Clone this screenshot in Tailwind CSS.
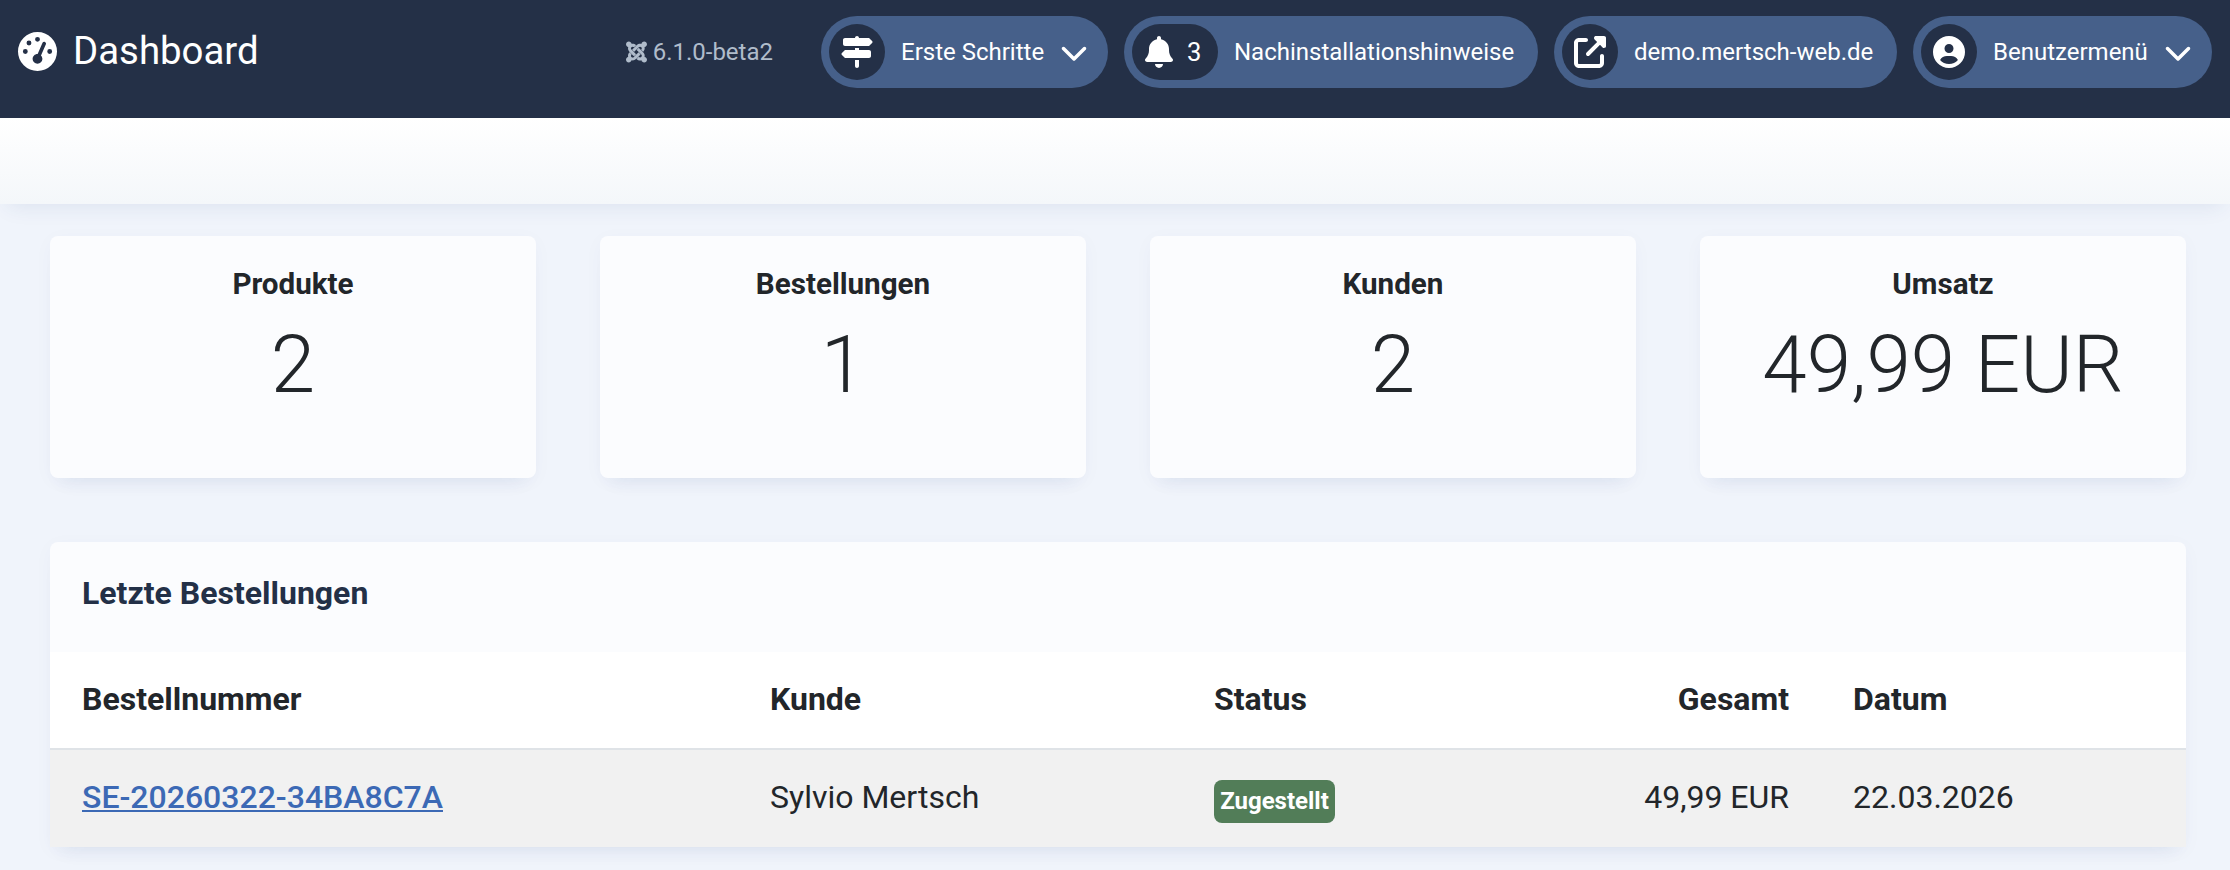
<!DOCTYPE html>
<html lang="de">
<head>
    <meta charset="UTF-8">
    <meta name="viewport" content="width=device-width, initial-scale=1.0">
    <script src="https://cdn.jsdelivr.net/npm/@tailwindcss/browser@4"></script>
    <title>Dashboard</title>
</head>
<body class="min-h-screen overflow-hidden bg-[#f0f4fb] font-[Roboto,sans-serif] text-[#22262a]">

    <!-- Icons -->
    <svg class="hidden">
        <symbol id="gauge" viewBox="0 0 512 512"><path d="M0 256a256 256 0 1 1 512 0A256 256 0 1 1 0 256zM288 96a32 32 0 1 0 -64 0 32 32 0 1 0 64 0zM256 416c35.3 0 64-28.7 64-64c0-17.4-6.9-33.1-18.1-44.6L366 161.7c5.3-12.1-.2-26.3-12.3-31.6s-26.3 .2-31.6 12.3L257.9 288c-.6 0-1.3 0-1.9 0c-35.3 0-64 28.7-64 64s28.7 64 64 64zM176 144a32 32 0 1 0 -64 0 32 32 0 1 0 64 0zM96 288a32 32 0 1 0 0-64 32 32 0 1 0 0 64zm352-32a32 32 0 1 0 -64 0 32 32 0 1 0 64 0z"/></symbol>
        <symbol id="joomla" viewBox="0 0 448 512"><path d="M.6 92.1C.6 58.8 27.4 32 60.4 32c30 0 54.5 21.9 59.2 50.2 32.6-7.6 67.1.6 96.5 30l-44.3 44.3c-20.5-20.5-42.6-16.3-55.4-3.5-14.3 14.3-14.3 37.9 0 52.2l99.5 99.5-44 44.3c-87.7-87.2-49.7-49.7-99.8-99.7-26.8-26.5-35-64.8-24.8-98.9C20.4 144.6.6 120.7.6 92.1zm129.5 116.4l44.3 44.3c10-10 89.7-89.7 99.7-99.8 14.3-14.3 37.6-14.3 51.9 0 12.8 12.8 17 35-3.5 55.4l44 44.3c31.2-31.2 38.5-67.6 28.9-101.2 29.2-4.1 51.9-29.2 51.9-59.5 0-33.2-26.8-60.1-59.8-60.1-30.3 0-55.4 22.5-59.5 51.6-33.8-9.9-71.7-1.5-98.3 25.1-18.3 19.1-71.1 71.5-99.6 99.9zm266.3 152.2c8.2-32.7-.9-68.5-26.3-93.9-11.8-12.2 5 4.7-99.5-99.7l-44.3 44.3 99.7 99.7c14.3 14.3 14.3 37.6 0 51.9-12.8 12.8-35 17-55.4-3.5l-44 44.3c27.6 30.2 68 38.8 102.7 28 5.5 27.4 29.7 48.1 58.9 48.1 33 0 59.8-26.8 59.8-60.1 0-30.2-22.5-55-51.6-59.1zm-84.3-53.1l-44-44.3c-87 86.4-50.4 50.4-99.7 99.8-14.3 14.3-37.6 14.3-51.9 0-13.1-13.4-16.9-35.3 3.2-55.4l-44-44.3c-30.2 30.2-38 65.2-29.5 98.3-26.7 6-46.2 29.9-46.2 58.2C0 453.2 26.8 480 59.8 480c28.6 0 52.5-19.8 58.6-46.7 32.7 8.2 68.5-.6 94.2-26 32.1-32 12.2-12.4 99.5-99.7z"/></symbol>
        <symbol id="signpost" viewBox="0 0 512 512"><path d="M224 32H64C46.3 32 32 46.3 32 64v64c0 17.7 14.3 32 32 32H441.4c4.2 0 8.3-1.7 11.3-4.7l48-48c6.2-6.2 6.2-16.4 0-22.6l-48-48c-3-3-7.1-4.7-11.3-4.7H288c0-17.7-14.3-32-32-32s-32 14.3-32 32zM480 256c0-17.7-14.3-32-32-32H288V192H224v32H70.6c-4.2 0-8.3 1.7-11.3 4.7l-48 48c-6.2 6.2-6.2 16.4 0 22.6l48 48c3 3 7.1 4.7 11.3 4.7H448c17.7 0 32-14.3 32-32V256zM288 480V384H224v96c0 17.7 14.3 32 32 32s32-14.3 32-32z"/></symbol>
        <symbol id="bell" viewBox="0 0 448 512"><path d="M224 0c-17.7 0-32 14.3-32 32V51.2C119 66 64 130.6 64 208v18.8c0 47-17.3 92.4-48.5 127.6l-7.4 8.3c-8.4 9.4-10.4 22.9-5.3 34.4S19.4 416 32 416H416c12.6 0 24-7.4 29.2-18.9s3.1-25-5.3-34.4l-7.4-8.3C401.3 319.2 384 273.9 384 226.8V208c0-77.4-55-142-128-156.8V32c0-17.7-14.3-32-32-32zm45.3 493.3c12-12 18.7-28.3 18.7-45.3H224 160c0 17 6.7 33.3 18.7 45.3s28.3 18.7 45.3 18.7s33.3-6.7 45.3-18.7z"/></symbol>
        <symbol id="external" viewBox="0 0 512 512"><path d="M352 0c-12.9 0-24.6 7.8-29.6 19.8s-2.2 25.7 6.9 34.9L370.7 96 201.4 265.4c-12.5 12.5-12.5 32.8 0 45.3s32.8 12.5 45.3 0L416 141.3l41.4 41.4c9.2 9.2 22.9 11.9 34.9 6.9s19.8-16.6 19.8-29.6V32c0-17.7-14.3-32-32-32H352zM80 32C35.8 32 0 67.8 0 112V432c0 44.2 35.8 80 80 80H400c44.2 0 80-35.8 80-80V320c0-17.7-14.3-32-32-32s-32 14.3-32 32V432c0 8.8-7.2 16-16 16H80c-8.8 0-16-7.2-16-16V112c0-8.8 7.2-16 16-16H192c17.7 0 32-14.3 32-32s-14.3-32-32-32H80z"/></symbol>
        <symbol id="user" viewBox="0 0 512 512"><path d="M399 384.2C376.9 345.8 335.4 320 288 320H224c-47.4 0-88.9 25.8-111 64.2c35.2 39.2 86.2 63.8 143 63.8s107.8-24.7 143-63.8zM0 256a256 256 0 1 1 512 0A256 256 0 1 1 0 256zm256 16a72 72 0 1 0 0-144 72 72 0 1 0 0 144z"/></symbol>
        <symbol id="chevron" viewBox="0 0 512 512"><path d="M233.4 406.6c12.5 12.5 32.8 12.5 45.3 0l192-192c12.5-12.5 12.5-32.8 0-45.3s-32.8-12.5-45.3 0L256 338.7 86.6 169.4c-12.5-12.5-32.8-12.5-45.3 0s-12.5 32.8 0 45.3l192 192z"/></symbol>
    </svg>

    <!-- Header -->
    <header class="flex h-[118px] items-start justify-between bg-[#243047] pt-4 pr-[18px] pl-[18px] text-white">
        <div class="flex h-[70px] items-center">
            <svg class="size-[39px] fill-current"><use href="#gauge"/></svg>
            <h1 class="ml-4 text-[38.4px] leading-[70px]">Dashboard</h1>
        </div>
        <div class="flex h-[72px] items-center gap-4 text-2xl">
            <div class="mr-8 flex items-center text-[#b0bccb]">
                <svg class="h-6 w-[21px] fill-current"><use href="#joomla"/></svg>
                <span class="ml-1.5">6.1.0-beta2</span>
            </div>
            <a class="flex h-[72px] w-[287px] items-center rounded-full bg-[#46608a] pl-2">
                <span class="flex size-14 items-center justify-center rounded-full bg-[#243047]"><svg class="size-8 fill-current"><use href="#signpost"/></svg></span>
                <span class="ml-4">Erste Schritte</span>
                <svg class="ml-4 size-7 fill-current"><use href="#chevron"/></svg>
            </a>
            <a class="flex h-[72px] w-[414px] items-center rounded-full bg-[#46608a] pl-2">
                <span class="flex h-14 w-[86px] items-center rounded-full bg-[#243047] pl-[13px]">
                    <svg class="h-8 w-7 fill-current"><use href="#bell"/></svg>
                    <span class="ml-3.5 text-[25.6px]">3</span>
                </span>
                <span class="ml-4">Nachinstallationshinweise</span>
            </a>
            <a class="flex h-[72px] w-[343px] items-center rounded-full bg-[#46608a] pl-2">
                <span class="flex size-14 items-center justify-center rounded-full bg-[#243047]"><svg class="size-8 fill-current"><use href="#external"/></svg></span>
                <span class="ml-4">demo.mertsch-web.de</span>
            </a>
            <a class="flex h-[72px] w-[299px] items-center rounded-full bg-[#46608a] pl-2">
                <span class="flex size-14 items-center justify-center rounded-full bg-[#243047]"><svg class="size-8 fill-current"><use href="#user"/></svg></span>
                <span class="ml-4">Benutzermenü</span>
                <svg class="ml-4 size-7 fill-current"><use href="#chevron"/></svg>
            </a>
        </div>
    </header>

    <!-- Toolbar -->
    <div class="h-[86px] bg-linear-to-b from-white to-[#f4f7fa] shadow-[0_10px_20px_-8px_rgba(40,70,130,0.1)]"></div>

    <main class="px-[50px] pt-8 pr-[44px]">
        <!-- Stats -->
        <div class="grid grid-cols-4 gap-16 text-center">
            <div class="h-[242px] rounded-lg bg-[#fbfcfe] pt-7 shadow-[0_4px_20px_rgba(40,70,130,0.03),0_14px_18px_-12px_rgba(40,70,130,0.09)]">
                <h3 class="text-[29.6px] leading-10 font-bold">Produkte</h3>
                <div class="mt-[13px] text-[80px] leading-24 font-light">2</div>
            </div>
            <div class="h-[242px] rounded-lg bg-[#fbfcfe] pt-7 shadow-[0_4px_20px_rgba(40,70,130,0.03),0_14px_18px_-12px_rgba(40,70,130,0.09)]">
                <h3 class="text-[29.6px] leading-10 font-bold">Bestellungen</h3>
                <div class="mt-[13px] text-[80px] leading-24 font-light">1</div>
            </div>
            <div class="h-[242px] rounded-lg bg-[#fbfcfe] pt-7 shadow-[0_4px_20px_rgba(40,70,130,0.03),0_14px_18px_-12px_rgba(40,70,130,0.09)]">
                <h3 class="text-[29.6px] leading-10 font-bold">Kunden</h3>
                <div class="mt-[13px] text-[80px] leading-24 font-light">2</div>
            </div>
            <div class="h-[242px] rounded-lg bg-[#fbfcfe] pt-7 shadow-[0_4px_20px_rgba(40,70,130,0.03),0_14px_18px_-12px_rgba(40,70,130,0.09)]">
                <h3 class="text-[29.6px] leading-10 font-bold">Umsatz</h3>
                <div class="mt-[13px] text-[80px] leading-24 font-light">49,99 EUR</div>
            </div>
        </div>

        <!-- Orders -->
        <div class="mt-16 rounded-t-lg bg-[#fbfcfe] shadow-[0_4px_20px_rgba(40,70,130,0.03),0_14px_18px_-12px_rgba(40,70,130,0.09)]">
            <h2 class="h-[110px] px-8 pt-[31px] text-[32px] leading-10 font-bold text-[#233047]">Letzte Bestellungen</h2>
            <table class="w-full table-fixed text-left text-[32px] leading-12">
                <thead>
                    <tr class="h-[97px] border-b-2 border-[#dfe3e7] bg-white">
                        <th class="w-[688px] px-8 pb-[3px]">Bestellnummer</th>
                        <th class="w-[444px] px-8 pb-[3px]">Kunde</th>
                        <th class="w-[325px] px-8 pb-[3px]">Status</th>
                        <th class="w-[314px] px-8 pb-[3px] text-right">Gesamt</th>
                        <th class="px-8 pb-[3px]">Datum</th>
                    </tr>
                </thead>
                <tbody>
                    <tr class="h-[98px] bg-[#f1f1f1]">
                        <td class="px-8 pb-1"><a class="font-medium text-[#3c69b5] underline decoration-2 underline-offset-2">SE-20260322-34BA8C7A</a></td>
                        <td class="px-8 pb-1">Sylvio Mertsch</td>
                        <td class="px-8"><span class="mt-[6px] block h-[43px] w-[121px] rounded-lg bg-[#527d58] text-center text-2xl leading-[43px] font-bold text-white">Zugestellt</span></td>
                        <td class="px-8 pb-1 text-right">49,99 EUR</td>
                        <td class="px-8 pb-1">22.03.2026</td>
                    </tr>
                </tbody>
            </table>
        </div>
    </main>
</body>
</html>
